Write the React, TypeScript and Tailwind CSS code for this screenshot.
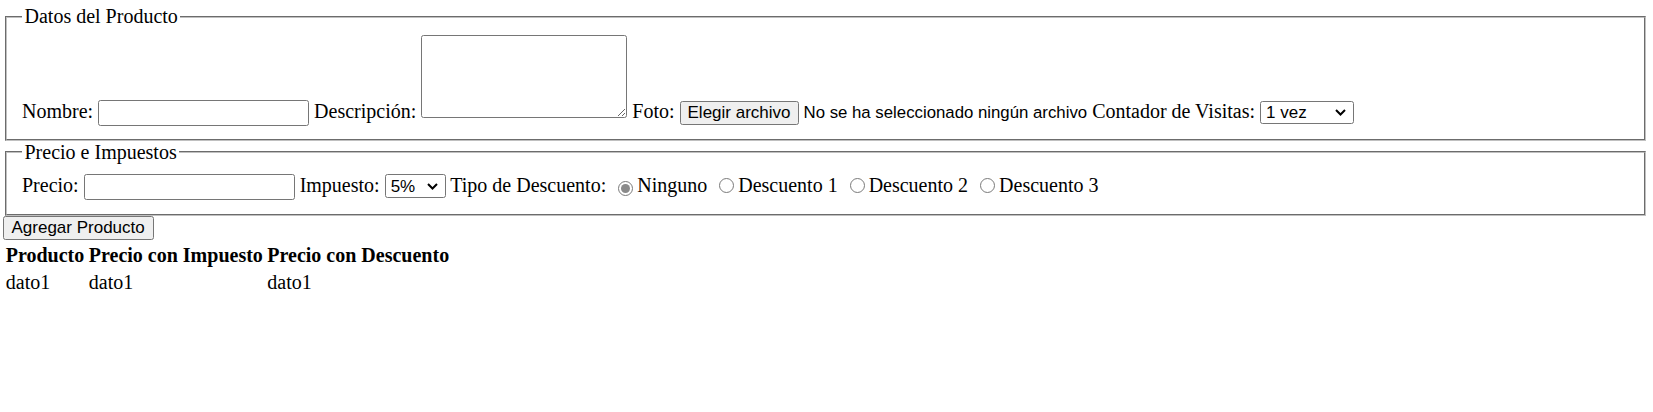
import React from "react";

function Chevron() {
  return (
    <svg
      className="pointer-events-none absolute right-[8px] top-[9px]"
      width="11"
      height="7"
      viewBox="0 0 11 7"
      fill="none"
    >
      <path d="M1 1 L5.5 5.5 L10 1" stroke="#000" strokeWidth="2" />
    </svg>
  );
}

function Radio({ checked }: { checked?: boolean }) {
  return (
    <span className="ml-[7px] mr-[4px] inline-flex h-[15px] w-[15px] items-center justify-center rounded-full border border-[#7a7a7a] bg-white align-[-1px]">
      {checked ? <span className="h-[9px] w-[9px] rounded-full bg-[#8a8a8a]" /> : null}
    </span>
  );
}

export default function App() {
  const ctl = "font-['Liberation_Sans',Arial,sans-serif] text-[17px] text-black";
  return (
    <div className="min-h-[412px] bg-white px-[2.5px] pt-[5px] font-['Liberation_Serif','Times_New_Roman',serif] text-[20px] leading-[normal] text-black">
      <fieldset className="ml-[2.5px] mr-[4.5px] border-2 border-[#c0c0c0] [border-style:groove] px-[15px] pb-[12.5px] pt-[7px]">
        <legend className="px-[2.5px]">Datos del Producto</legend>
        <div>
          Nombre:{" "}
          <input
            type="text"
            className={`h-[26px] w-[211px] rounded-[2.5px] border border-[#767676] bg-white px-[2.5px] align-baseline ${ctl}`}
          />{" "}
          Descripción:{" "}
          <textarea
            className={`inline-block h-[83px] w-[206px] resize rounded-[2.5px] border border-[#767676] bg-white align-baseline ${ctl}`}
          />{" "}
          Foto:{" "}
          <span className="inline-block">
            <button
              type="button"
              className={`mr-[5px] h-[24px] rounded-[2.5px] border border-[#767676] bg-[#efefef] px-[7px] ${ctl}`}
            >
              Elegir archivo
            </button>
            <span className="font-['Liberation_Sans',Arial,sans-serif] text-[16.8px] text-black">
              No se ha seleccionado ningún archivo
            </span>
          </span>{" "}
          Contador de Visitas:{" "}
          <span className="relative inline-block">
            <select
              defaultValue="1"
              className={`h-[23px] w-[94px] appearance-none rounded-[2.5px] border border-[#767676] bg-white pl-[5px] ${ctl}`}
            >
              <option value="1">1 vez</option>
              <option value="2">2 veces</option>
              <option value="3">3 veces</option>
            </select>
            <Chevron />
          </span>
        </div>
      </fieldset>

      <fieldset className="ml-[2.5px] mr-[4.5px] border-2 border-[#c0c0c0] [border-style:groove] px-[15px] pb-[14px] pt-[10px]">
        <legend className="px-[2.5px]">Precio e Impuestos</legend>
        <div>
          Precio:{" "}
          <input
            type="text"
            className={`h-[26px] w-[211px] rounded-[2.5px] border border-[#767676] bg-white px-[2.5px] align-baseline ${ctl}`}
          />{" "}
          Impuesto:{" "}
          <span className="relative inline-block">
            <select
              defaultValue="5"
              className={`h-[24px] w-[61px] appearance-none rounded-[2.5px] border border-[#767676] bg-white pl-[5px] ${ctl}`}
            >
              <option value="5">5%</option>
              <option value="10">10%</option>
              <option value="21">21%</option>
            </select>
            <Chevron />
          </span>{" "}
          Tipo de Descuento:{" "}
          <Radio checked />
          Ninguno{" "}
          <Radio />
          Descuento 1{" "}
          <Radio />
          Descuento 2{" "}
          <Radio />
          Descuento 3
        </div>
      </fieldset>

      <button
        type="button"
        className={`block h-[24px] rounded-[2.5px] border border-[#767676] bg-[#efefef] px-[8px] ${ctl}`}
      >
        Agregar Producto
      </button>

      <table className="mt-[1px] border-separate border-spacing-[2.5px]">
        <thead>
          <tr>
            <th className="p-[1.25px] text-left font-bold">Producto</th>
            <th className="p-[1.25px] text-left font-bold">Precio con Impuesto</th>
            <th className="p-[1.25px] text-left font-bold">Precio con Descuento</th>
          </tr>
        </thead>
        <tbody>
          <tr>
            <td className="p-[1.25px]">dato1</td>
            <td className="p-[1.25px]">dato1</td>
            <td className="p-[1.25px]">dato1</td>
          </tr>
        </tbody>
      </table>
    </div>
  );
}
